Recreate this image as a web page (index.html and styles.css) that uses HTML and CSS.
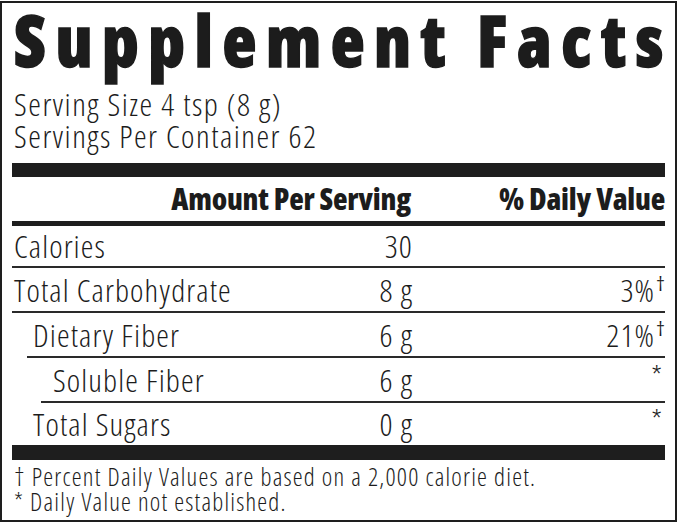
FILE: index.html
```html
<!DOCTYPE html>
<html lang="en">
<head>
<meta charset="utf-8">
<title>Supplement Facts</title>
<link rel="stylesheet" href="styles.css">
</head>
<body>
<div class="label">
  <h1 class="title">Supplement Facts</h1>
  <div class="serving">Serving Size 4 tsp (8 g)</div>
  <div class="serving">Servings Per Container 62</div>
  <div class="bar bar-thick"></div>
  <div class="row head">
    <span class="name"></span>
    <span class="amt">Amount Per Serving</span>
    <span class="dv">% Daily Value</span>
  </div>
  <div class="bar bar-mid"></div>
  <div class="row first lined">
    <span class="name">Calories</span>
    <span class="amt">30</span>
    <span class="dv"></span>
  </div>
  <div class="row lined">
    <span class="name">Total Carbohydrate</span>
    <span class="amt">8 g</span>
    <span class="dv">3%<sup class="mark">†</sup></span>
  </div>
  <div class="row lined lvl1">
    <span class="name">Dietary Fiber</span>
    <span class="amt">6 g</span>
    <span class="dv">21%<sup class="mark">†</sup></span>
  </div>
  <div class="row lined lvl2">
    <span class="name">Soluble Fiber</span>
    <span class="amt">6 g</span>
    <span class="dv"><span class="star">*</span></span>
  </div>
  <div class="row last lvl1">
    <span class="name">Total Sugars</span>
    <span class="amt">0 g</span>
    <span class="dv"><span class="star">*</span></span>
  </div>
  <div class="bar bar-bottom"></div>
  <div class="notes">
    <p class="note">† Percent Daily Values are based on a 2,000 calorie diet.</p>
    <p class="note">* Daily Value not established.</p>
  </div>
</div>
</body>
</html>
```
FILE: styles.css
```css
html, body {
  margin: 0;
  padding: 0;
  background: #ffffff;
}

body {
  padding-top: 1px;
}

.label {
  box-sizing: border-box;
  width: 677px;
  height: 521px;
  border: 2px solid #1e1e1e;
  padding: 2px 10px 0 10px;
  color: #1c1c1c;
  font-family: "Open Sans", "DejaVu Sans", sans-serif;
  font-stretch: 75%;
  font-weight: 300;
  display: flex;
  flex-direction: column;
}

.title {
  margin: 0 -12px 13px 0;
  font-size: 70px;
  line-height: 70px;
  font-weight: 800;
  letter-spacing: 9.6px;
  padding-left: 2px;
  white-space: nowrap;
  -webkit-text-stroke: 1.4px #1c1c1c;
}

.serving {
  font-size: 32px;
  line-height: 32px;
  padding-left: 2px;
  letter-spacing: 1.5px;
}

.serving + .bar {
  margin-top: 11px;
}

.bar {
  background: #1e1e1e;
}

.bar-thick { height: 14px; }
.bar-mid { height: 5px; }
.bar-bottom { height: 15px; }

.row {
  display: flex;
  align-items: center;
  height: 43px;
  font-size: 32px;
  line-height: 43px;
  letter-spacing: 1.1px;
  padding-left: 2px;
}

.row.lined {
  border-bottom: 2px solid #2a2a2a;
}

.row.first {
  height: 40px;
  line-height: 40px;
}

.row.last {
  height: 42px;
  line-height: 42px;
}

.row.lvl1 {
  margin-left: 15px;
  padding-left: 6px;
}

.row.lvl2 {
  margin-left: 29px;
  padding-left: 12px;
}

.name {
  flex: 1;
  min-width: 0;
  white-space: nowrap;
}

.amt {
  width: 200px;
  text-align: right;
  white-space: nowrap;
}

.dv {
  width: 252px;
  text-align: right;
  white-space: nowrap;
}

.head {
  height: 44px;
  line-height: 44px;
  font-size: 30px;
  font-weight: 800;
  letter-spacing: -0.2px;
}

.head .amt {
  width: 260px;
  padding-right: 2px;
}

.mark {
  font-size: 20px;
  font-weight: 400;
  line-height: 0;
  vertical-align: 11px;
  margin-left: 1px;
  letter-spacing: 0;
}

.star {
  display: inline-block;
  font-size: 30px;
  line-height: 0;
  vertical-align: 5px;
  margin-right: 3px;
  letter-spacing: 0;
}

.notes {
  padding-top: 4px;
}

.note {
  margin: 0;
  font-size: 25px;
  line-height: 25px;
  padding-left: 2px;
  letter-spacing: 1.2px;
}
```
